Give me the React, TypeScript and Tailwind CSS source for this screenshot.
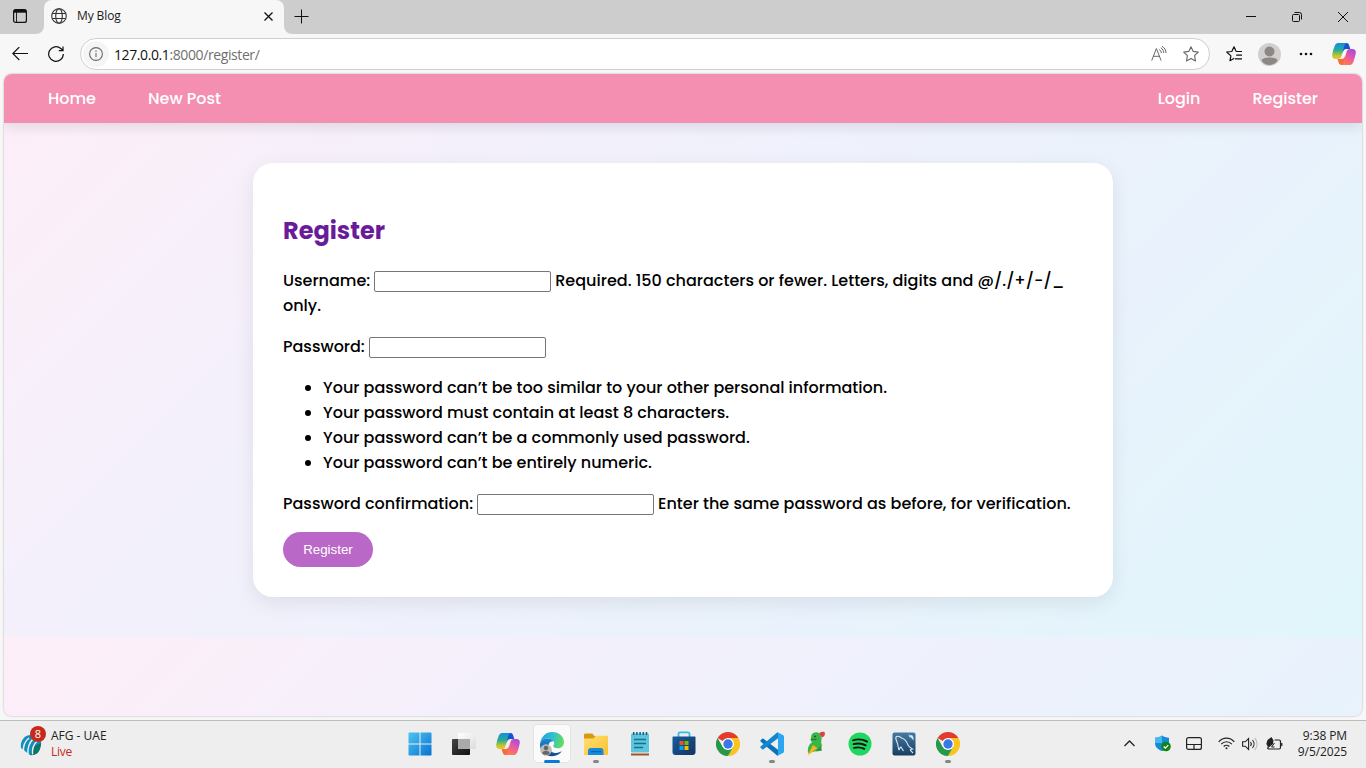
import React from "react";

const Windows = () => (
  <svg width="24" height="24" viewBox="0 0 24 24">
    <defs>
      <linearGradient id="win" x1="0" y1="0" x2="1" y2="1" gradientUnits="objectBoundingBox">
        <stop offset="0" stopColor="#4cc5f5" />
        <stop offset="1" stopColor="#0a72cf" />
      </linearGradient>
    </defs>
    <path fill="url(#win)" d="M1 .5h10.500V11.500H.5V1zM12.500 .5H23l.5.500V11.500h-11zM.5 12.500h11v11H1l-.5-.5zM12.500 12.500h11V23l-.5.500H12.500z" />
  </svg>
);

const TaskView = () => (
  <svg width="26" height="24" viewBox="0 0 26 24">
    <defs>
      <linearGradient id="tv1" x1="0" y1="0" x2="1" y2="1">
        <stop offset="0" stopColor="#444" />
        <stop offset="1" stopColor="#111" />
      </linearGradient>
      <linearGradient id="tv2" x1="0" y1="0" x2="1" y2="1">
        <stop offset="0" stopColor="#fff" />
        <stop offset="1" stopColor="#dcdcdc" />
      </linearGradient>
    </defs>
    <rect x="1" y="7" width="18" height="16" rx="1" fill="url(#tv1)" />
    <rect x="7" y="1" width="18" height="16" rx="1" fill="url(#tv2)" />
    <path d="M7 7h12v10H7z" fill="#aaa" />
  </svg>
);

const Copilot = ({ id }: { id: string }) => (
  <svg width="24" height="22" viewBox="0 0 24 22">
    <defs>
      <linearGradient id={id + "a"} x1="0" y1="0" x2="0" y2="1">
        <stop offset="0" stopColor="#168de5" />
        <stop offset=".45" stopColor="#28ad93" />
        <stop offset=".8" stopColor="#c5c72c" />
        <stop offset="1" stopColor="#f5bf22" />
      </linearGradient>
      <linearGradient id={id + "b"} x1=".8" y1="0" x2=".3" y2="1">
        <stop offset="0" stopColor="#a44be0" />
        <stop offset=".55" stopColor="#ee5c9c" />
        <stop offset="1" stopColor="#fc8046" />
      </linearGradient>
    </defs>
    <path d="M10 0h4.500c2 0 2.400 1.300 3 3.500l.8 2.500h-3.800c-2.500 0-3.200 1.500-4 4.500z" fill="#1753cc" />
    <path d="M7 0h8c-1.800.4-2.300 1.700-2.900 3.800L9.500 13c-.6 2-1.400 3-3.500 3H3.500C.8 16-.2 14.200.3 11.500.9 8 2 4.500 3 2.300 3.800.6 5 0 7 0z" fill={"url(#" + id + "a)"} />
    <path d="M14 22H9.500c-2 0-2.600-1.300-3.200-3.500L5.600 16h3.800c2.500 0 3.300-1.500 4.100-4.500z" fill="#f46e3f" />
    <path d="M17 22H9c1.800-.4 2.300-1.700 2.900-3.800L14.500 9c.6-2 1.400-3 3.500-3h2.500c2.700 0 3.700 1.800 3.200 4.500-.6 3.500-1.700 7-2.700 9.200-.8 1.700-2 2.300-4 2.300z" fill={"url(#" + id + "b)"} />
  </svg>
);

const Edge = () => (
  <svg width="26" height="26" viewBox="0 0 26 26">
    <defs>
      <linearGradient id="edg" x1="0" y1=".3" x2="1" y2=".5">
        <stop offset="0" stopColor="#249de0" />
        <stop offset=".5" stopColor="#2fc0d0" />
        <stop offset="1" stopColor="#67dd58" />
      </linearGradient>
      <linearGradient id="edb" x1="0" y1="0" x2="0" y2="1">
        <stop offset="0" stopColor="#1b8ad6" />
        <stop offset="1" stopColor="#114a8b" />
      </linearGradient>
    </defs>
    <path d="M1 13C2 5.500 7 1 13.200 1 20 1 25 5.600 25 11c0 4-2.800 6.300-6.300 6.300-2.800 0-4.500-1-4.500-2.200 0-.8 1-1.200 1-2.900C15.200 9.800 12.500 7.500 8.700 7.500 4.500 7.500 1.700 10 1 13z" fill="url(#edg)" />
    <path d="M1 13.500C1.500 9.500 5 7.500 8.700 7.500c3.300 0 5.300 1.400 6.100 3.100-1-.5-3.800-.4-4.900 2.400-1.200 3.200.8 7.700 5 8.700 3.200.8 6-.3 8-1.600-2 3.200-5.500 5.200-9.900 5.200C6 25.300.600 19.800 1 13.500z" fill="url(#edb)" />
    <circle cx="7" cy="19" r="5.800" fill="#bdbbb8" />
    <circle cx="7" cy="17" r="2.300" fill="#686663" />
    <path d="M3.300 22.200c0-3.400 7.400-3.400 7.400 0-1.500 2-5.900 2-7.400 0z" fill="#686663" />
  </svg>
);

const Folder = () => (
  <svg width="26" height="24" viewBox="0 0 26 24">
    <defs>
      <linearGradient id="fol" x1="0" y1="0" x2="1" y2="1">
        <stop offset="0" stopColor="#ffdf76" />
        <stop offset="1" stopColor="#fbc02c" />
      </linearGradient>
    </defs>
    <path d="M1 3c0-1 .6-1.500 1.500-1.500h6.700L11.500 4H24c.8 0 1 .4 1 1v6H1z" fill="#d99b0c" />
    <path d="M1 6.500h9.500L13 3.800h11c.7 0 1 .4 1 1V22c0 .6-.4 1-1 1H2c-.6 0-1-.4-1-1z" fill="url(#fol)" />
    <path d="M5 23v-4c0-2 1-3 3-3h9.500c2 0 3 1 3 3v4z" fill="#168ad9" />
    <path d="M8 19h10v1.200H8z" fill="#0c63b0" />
  </svg>
);

const Notepad = () => (
  <svg width="20" height="26" viewBox="0 0 20 26">
    <path d="M1 21h18v3.500H1z" fill="#a9541c" />
    <path d="M1 21h18v1.500H1z" fill="#f0f0f0" />
    <rect x="1" y="2.500" width="18" height="19" rx="1" fill="#5cc5e0" />
    <path d="M3.700 1v3M6.900 1v3M10.100 1v3M13.300 1v3M16.500 1v3" stroke="#12617c" strokeWidth="1.500" />
    <path d="M4 8.500h12M4 12.500h12M4 16.500h9" stroke="#15718d" strokeWidth="1.500" />
  </svg>
);

const Store = () => (
  <svg width="24" height="25" viewBox="0 0 24 25">
    <defs>
      <linearGradient id="sto" x1="0" y1="0" x2="1" y2="1">
        <stop offset="0" stopColor="#155d9f" />
        <stop offset="1" stopColor="#15345f" />
      </linearGradient>
    </defs>
    <path d="M6.500 7V3c0-1 .5-1.600 1.500-1.600h8c1 0 1.500.6 1.500 1.600v4" fill="none" stroke="#38b9ee" strokeWidth="1.800" />
    <path d="M.5 6.500c0-.7.300-1 1-1h21c.7 0 1 .3 1 1V21c0 2-1 3-3 3h-17c-2 0-3-1-3-3z" fill="url(#sto)" />
    <path d="M7.500 10h4v4h-4z" fill="#f25022" />
    <path d="M12.500 10h4v4h-4z" fill="#7fba00" />
    <path d="M7.500 15h4v4h-4z" fill="#00a4ef" />
    <path d="M12.500 15h4v4h-4z" fill="#ffb900" />
  </svg>
);

const Chrome = () => (
  <svg width="24" height="24" viewBox="0 0 24 24">
    <path d="M12 12 1.600 6A12 12 0 0 1 22.400 6z" fill="#e33b2e" />
    <path d="M12 12V6h10.400A12 12 0 0 1 12 24l5.200-9z" fill="#fcc31e" />
    <path d="M1.600 6 6.800 15 12 12l5.200 3L12 24A12 12 0 0 1 1.600 6z" fill="#279847" />
    <circle cx="12" cy="12" r="6" fill="#fff" />
    <circle cx="12" cy="12" r="4.700" fill="#3a78e7" />
  </svg>
);

const VSCode = () => (
  <svg width="24" height="24" viewBox="0 0 24 24">
    <path d="M.6 8.200 2.200 6.800c.4-.3.900-.3 1.300 0L18 17.800v5.700c-.6.100-1.100-.1-1.500-.5L.6 9.500c-.5-.4-.5-.9 0-1.300z" fill="#0d72b9" />
    <path d="m.6 15.800 1.600 1.400c.4.300.9.300 1.300 0L18 6.200V.5c-.6-.1-1.100.1-1.500.5L.6 14.500c-.5.4-.5.900 0 1.300z" fill="#1287cf" />
    <path d="M16.500 23c.8.700 1.500.5 2 .3l4.400-2.200c.7-.3 1.100-.9 1.100-1.700V4.600c0-.8-.4-1.400-1.100-1.700L18.500.7c-.5-.2-1.200-.4-2 .3.600-.5 1.500-.1 1.500.7v20.600c0 .8-.9 1.200-1.500.7z" fill="#2aa7f1" />
  </svg>
);

const Parrot = () => (
  <svg width="20" height="25" viewBox="0 0 20 25">
    <path d="M13 3c.5-2 3.500-2.800 5.500-2 1 2 .3 4.500-2.500 5.500z" fill="#e23d42" />
    <path d="M5.500 4C7 1 11 .3 13.500 2.500L15.700 7c0 2.500-1 4-.2 5.500 1.300 3-.5 7-4.500 7.500L2 22c-.5-5 .5-8.500 4-10.500L4.500 9z" fill="#39b54a" />
    <path d="M1.500 24.500 7 14l4.500 3-7 5.500z" fill="#f9b51d" />
    <path d="m10 20.500 6-1-1.500-4.500z" fill="#239438" />
    <circle cx="9" cy="5.500" r="1" fill="#175d27" />
    <path d="M5 8.500h5.500" stroke="#1d7930" strokeWidth="1.200" />
  </svg>
);

const Spotify = () => (
  <svg width="24" height="24" viewBox="0 0 24 24">
    <circle cx="12" cy="12" r="11.500" fill="#1ed760" />
    <path d="M5 8.300c5-1.500 10-1 14.200 1.300M5.500 12.200c4.300-1.200 8.500-.8 12.200 1.200M6 15.800c3.700-.9 7.200-.6 10.300 1.100" fill="none" stroke="#111" strokeWidth="1.800" strokeLinecap="round" />
  </svg>
);

const MySQL = () => (
  <svg width="24" height="24" viewBox="0 0 24 24">
    <defs>
      <linearGradient id="mys" x1="0" y1="0" x2="0" y2="1">
        <stop offset="0" stopColor="#467aa1" />
        <stop offset="1" stopColor="#173e62" />
      </linearGradient>
    </defs>
    <rect x=".5" y=".5" width="23" height="23" rx="2" fill="url(#mys)" />
    <path d="M7 18C6 15 6 12.500 5 10 4 7.500 2.800 5.500 4.500 4.500c2.200-.8 3.600.6 5 1.500 4 1 5.500 4 6.800 7.500.8 1.500 2.500 2.500 4.200 3.500-1.500.2-2.500.7-2 1.500l2.500 2.500M7 18c.5-1.500 1-2.300 2-3l2.500 4" fill="none" stroke="#dce9f2" strokeWidth="1.100" />
    <path d="m16 2 1.500 2L17 5l2 .5 2.500 3V5.500L20 3l-1.500.5z" fill="#dbe8f1" />
  </svg>
);

const Globe = () => (
  <svg width="16" height="16" viewBox="0 0 16 16" fill="none" stroke="#333" strokeWidth="1.100">
    <circle cx="8" cy="8" r="7.300" />
    <ellipse cx="8" cy="8" rx="3.300" ry="7.300" />
    <path d="M1.300 5.500h13.400M1.300 10.500h13.400" />
  </svg>
);

type AppItem = { icon: React.ReactNode; state?: "open" | "active"; name: string };

const apps: AppItem[] = [
  { name: "start", icon: <Windows /> },
  { name: "tasks", icon: <TaskView /> },
  { name: "copilot", icon: <Copilot id="tb" /> },
  { name: "edge", icon: <Edge />, state: "active" },
  { name: "files", icon: <Folder />, state: "open" },
  { name: "notepad", icon: <Notepad /> },
  { name: "store", icon: <Store /> },
  { name: "chrome", icon: <Chrome /> },
  { name: "code", icon: <VSCode />, state: "open" },
  { name: "parrot", icon: <Parrot /> },
  { name: "spotify", icon: <Spotify /> },
  { name: "mysql", icon: <MySQL /> },
  { name: "chrome2", icon: <Chrome />, state: "open" },
];

function TabStrip() {
  return (
    <header className="flex h-[34px] shrink-0 bg-[#cdcdcd]">
      <div className="bg-[#f7f7f7]">
        <div className="flex h-full w-11 items-center rounded-br-lg bg-[#cdcdcd] pl-[13px] pb-0.5">
          <svg width="14" height="14" viewBox="0 0 14 14" fill="none" stroke="#111" strokeWidth="1.200">
            <rect x=".6" y=".6" width="12.800" height="12.800" rx="2" />
            <path d="M1 2.200h12" strokeWidth="3" />
            <path d="M3.500 3v10.500" strokeWidth="0.900" />
          </svg>
        </div>
      </div>
      <div className="flex w-60 items-center rounded-t-lg bg-[#f7f7f7] pr-[11px] pb-0.5 pl-[7px]">
        <Globe />
        <span className="ml-2.5 flex-1 text-[12px] tracking-[-0.1px] text-[#1b1b1b]">My Blog</span>
        <svg width="9" height="9" viewBox="0 0 9 9" stroke="#111" strokeWidth="1.300">
          <path d="m.5.5 8 8m0-8-8 8" />
        </svg>
      </div>
      <div className="flex-1 bg-[#f7f7f7]">
        <div className="flex h-full items-center rounded-bl-lg bg-[#cdcdcd] pb-0.5 pl-2.5">
          <svg width="15" height="15" viewBox="0 0 15 15" stroke="#111">
            <path d="M7.500.5v14M.5 7.500h14" />
          </svg>
          <div className="ml-auto flex items-center gap-9 pr-[18px] pt-0.5">
            <svg width="10" height="10" viewBox="0 0 10 10" stroke="#111">
              <path d="M0 4.500h10" />
            </svg>
            <svg width="10" height="10" viewBox="0 0 10 10" fill="none" stroke="#111">
              <rect x=".5" y="2.500" width="7" height="7" rx="1" />
              <path d="M2.500.500H7.500A2 2 0 0 1 9.500 2.500v5" />
            </svg>
            <svg width="10" height="10" viewBox="0 0 10 10" stroke="#111">
              <path d="m0 0 10 10M10 0 0 10" />
            </svg>
          </div>
        </div>
      </div>
    </header>
  );
}

function Toolbar() {
  return (
    <div className="flex h-10 shrink-0 items-center bg-[#f7f7f7] pl-3">
      <svg width="16" height="14" viewBox="0 0 16 14" fill="none" stroke="#111" strokeWidth="1.100">
        <path d="M16 6.500H.8M7.300 0 .8 6.500l6.500 6.500" />
      </svg>
      <svg className="ml-5" width="16" height="16" viewBox="0 0 16 16" fill="none" stroke="#111" strokeWidth="1.200">
        <path d="M15.300 8A7.300 7.300 0 1 1 12.800 2.500L15 4.500M15 .5v4.200h-4.200" />
      </svg>
      <div className="ml-4 flex h-8 w-[1130px] items-center rounded-full border border-[#cfcfcf] bg-white pr-2.5 pl-0.5">
        <div className="flex size-[26px] items-center justify-center rounded-full bg-[#f5f5f5]">
          <svg width="14" height="14" viewBox="0 0 14 14" fill="none" stroke="#6b6b6b" strokeWidth="1.100">
            <circle cx="7" cy="7" r="6.400" />
            <path d="M7 6v4.200M7 3.600v1.300" />
          </svg>
        </div>
        <span className="ml-[5px] text-[14px] tracking-[-0.4px] text-[#707070]">
          <span className="text-[#111]">127.0.0.1</span>:8000/register/
        </span>
        <svg className="ml-auto" width="16" height="16" viewBox="0 0 16 16" fill="none" stroke="#666" strokeWidth="1">
          <path d="M.7 14.500 5.400 2.500l4.700 12M2.300 10.300h6.200M8.300 3.500c1.300.8 2 2 2 3.500M9.800 1.800c2 1.300 2.900 3 3 5.200M11 .3c2.700 1.600 4 3.800 4 6.700" />
        </svg>
        <svg className="ml-4" width="16" height="16" viewBox="0 0 16 16" fill="none" stroke="#666" strokeWidth="1.100" strokeLinejoin="round">
          <path d="m8 .7 2.200 4.700 5.100.7-3.700 3.600.9 5.200L8 12.400l-4.500 2.500.9-5.200L.7 6.100l5.100-.7z" />
        </svg>
      </div>
      <svg className="ml-4" width="17" height="16" viewBox="0 0 17 16" fill="none" stroke="#111" strokeWidth="1.200" strokeLinejoin="round">
        <path d="M8.300 12.300 4 14.700l.9-4.800L.7 6l5.100-.5L8 .8l2.200 4.700M10.200 5.500H16M10.200 9.200H16M9 12.900H16" />
      </svg>
      <svg className="ml-[15px]" width="23" height="23" viewBox="0 0 23 23">
        <circle cx="11.500" cy="11.500" r="11.500" fill="#d2d0ce" />
        <circle cx="11.500" cy="8.500" r="5" fill="#8c8885" />
        <path d="M3.500 17.500c0-4 16-4 16 0-3.500 6-12.500 6-16 0z" fill="#8c8885" />
      </svg>
      <svg className="ml-[18px]" width="14" height="4" viewBox="0 0 14 4" fill="#111">
        <circle cx="2" cy="2" r="1.300" />
        <circle cx="7" cy="2" r="1.300" />
        <circle cx="12" cy="2" r="1.300" />
      </svg>
      <div className="ml-[19px]">
        <Copilot id="br" />
      </div>
    </div>
  );
}

const field = "mx-1 inline-block h-[21px] w-[177px] rounded-[2px] border border-[#767676] bg-white align-middle";

function Page() {
  return (
    <div className="mx-1 flex h-[642px] shrink-0 flex-col overflow-hidden rounded-lg bg-[linear-gradient(135deg,#fdeef8_0%,#f3f0fb_30%,#e9f2fc_70%,#e0f6fb_100%)] bg-[length:100%_563px] font-['Poppins','Inter',sans-serif] text-base font-medium text-black shadow-[0_0_2px_rgba(0,0,0,0.35)]">
      <nav className="flex h-[49px] shrink-0 items-center justify-between bg-[#f48fb1] px-11 text-white shadow-[0_4px_12px_rgba(0,0,0,0.1)]">
        <div className="flex gap-[52px]">
          <span>Home</span>
          <span>New Post</span>
        </div>
        <div className="flex gap-[52px]">
          <span>Login</span>
          <span>Register</span>
        </div>
      </nav>
      <main className="mx-auto mt-10 h-[434px] w-[860px] shrink-0 rounded-[20px] bg-white px-[30px] pt-[50px] leading-[25px] shadow-[0_6px_20px_rgba(0,0,0,0.08)]">
        <h2 className="text-2xl leading-[36px] font-bold text-[#6a1b9a]">Register</h2>
        <p className="mt-[19px] whitespace-nowrap">
          <span>Username:</span>
          <input className={field} />
          <span className="tracking-[0.01px]">Required. 150 characters or fewer. Letters, digits and @/./+/-/_</span>
          <br />
          only.
        </p>
        <p className="mt-4 whitespace-nowrap">
          <span>Password:</span>
          <input className={field} />
        </p>
        <ul className="mt-4 list-disc pl-10 whitespace-nowrap">
          <li>Your password can’t be too similar to your other personal information.</li>
          <li>Your password must contain at least 8 characters.</li>
          <li>Your password can’t be a commonly used password.</li>
          <li>Your password can’t be entirely numeric.</li>
        </ul>
        <p className="mt-4 whitespace-nowrap">
          <span>Password confirmation:</span>
          <input className={field} />
          <span className="tracking-[0.01px]">Enter the same password as before, for verification.</span>
        </p>
        <button className="mt-4 block h-[35px] w-[90px] rounded-[20px] bg-[#ba68c8] font-['Liberation_Sans',sans-serif] text-[13.333px] font-normal text-white">
          Register
        </button>
      </main>
    </div>
  );
}

function Taskbar() {
  return (
    <footer className="mt-1 flex h-12 shrink-0 items-center border-t border-[#bdbdbd] bg-[#eeeeee] pb-0.5 text-[12px] leading-4 text-[#222]">
      <div className="flex w-[400px] items-center pl-5">
        <div className="relative h-8 w-7">
          <svg className="absolute top-1 left-0" width="23" height="24" viewBox="0 0 23 24">
            <path d="M1 16C0 10 3 4 10 3l8 1c4 4 4 10 1 15-4 4-8 4-9 4" fill="#0e8fbd" />
            <path d="M10 23c5 1 9-2 10-7l1-5-7 3z" fill="#0b7567" />
            <path d="M3.500 20C3 14 5 9 9 6M8 22c-.5-6 1-11 5-15M12.500 22.500C12 17 14 12 17 9" fill="none" stroke="#eee" strokeWidth="1.500" />
          </svg>
          <span className="absolute -top-0.5 left-2.5 flex size-4 items-center justify-center rounded-full bg-[#c42b1c] text-[11px] text-white">8</span>
        </div>
        <div className="ml-[3px]">
          <div>AFG - UAE</div>
          <div className="tracking-[-0.3px] text-[#c42b1c]">Live</div>
        </div>
      </div>
      <div className="flex h-[45px] items-center gap-1">
        {apps.map((a) => (
          <div key={a.name} className="relative flex h-full w-10 items-center justify-center">
            {a.state === "active" && <div className="absolute top-[3px] left-px h-[39px] w-[38px] rounded-[4px] border border-[#e4e4e4] bg-[#fafafa]" />}
            <div className="relative">{a.icon}</div>
            {a.state === "active" && <div className="absolute bottom-[3px] h-[3px] w-4 rounded-full bg-[#0a78d4]" />}
            {a.state === "open" && <div className="absolute bottom-[3px] h-[3px] w-1.5 rounded-full bg-[#868686]" />}
          </div>
        ))}
      </div>
      <div className="ml-auto flex items-center pr-[19px]">
        <svg width="11" height="7" viewBox="0 0 11 7" fill="none" stroke="#222" strokeWidth="1.300">
          <path d="m.5 6 5-5 5 5" />
        </svg>
        <svg className="ml-5" width="16" height="17" viewBox="0 0 16 17">
          <path d="M7 .5c2 1.500 4 2 7 2.200V8c0 4-3 6.500-7 8-4-1.500-7-4-7-8V2.700C3 2.500 5 2 7 .5z" fill="#1689d8" />
          <path d="M7 .5V8H0V2.700C3 2.500 5 2 7 .5z" fill="#45baf0" />
          <circle cx="11" cy="11.500" r="4.800" fill="#128318" />
          <path d="m8.700 11.500 1.600 1.700 3-3" fill="none" stroke="#fff" strokeWidth="1.200" />
        </svg>
        <svg className="ml-[15px]" width="16" height="13" viewBox="0 0 16 13" fill="none" stroke="#222" strokeWidth="1.200">
          <rect x=".6" y=".6" width="14.800" height="11.800" rx="2" />
          <path d="M1 7.500h14M8 7.500v5" />
        </svg>
        <svg className="ml-4" width="17" height="13" viewBox="0 0 17 13" fill="none" stroke="#222" strokeWidth="1.200">
          <path d="M.7 4.800c4.300-4.900 11.300-4.900 15.600 0M3.200 7.200c3-3.300 7.600-3.300 10.600 0M5.700 9.500c1.600-1.700 4-1.700 5.600 0" />
          <circle cx="8.500" cy="11.300" r="1" fill="#222" stroke="none" />
        </svg>
        <svg className="ml-[7px]" width="16" height="14" viewBox="0 0 16 14" fill="none" stroke="#222" strokeWidth="1.100">
          <path d="M.6 4.800h2.600L6.600 1.500v11L3.200 9.200H.6zM8.500 5c1 1.200 1 2.800 0 4M10.500 3c2 2.300 2 5.700 0 8" />
          <path d="M12.700 1c3.200 3.400 3.200 8.600 0 12" stroke="#bbb" />
        </svg>
        <svg className="ml-2" width="17" height="14" viewBox="0 0 17 14" fill="none" stroke="#222" strokeWidth="1.200">
          <path d="M8.500 3h4.500c1 0 1.500.5 1.500 1.500v6c0 1-.5 1.500-1.500 1.500H3.500c-1.500 0-2-.5-2-1.500M15.800 6v3" />
          <path d="M5.500 0 7.500 3.500 7 7 4 9.500l-2 1.500L1.500 9 .3 7l1.200-4z" fill="#222" stroke="none" />
          <path d="M4 6.500 2.500 9.500M8.500 6 5.500 10h3" strokeWidth="1" />
        </svg>
        <div className="w-[64px] text-right tracking-[-0.1px]">
          <div>9:38 PM</div>
          <div>9/5/2025</div>
        </div>
      </div>
    </footer>
  );
}

export default function App() {
  return (
    <div className="flex h-[768px] w-[1366px] flex-col overflow-hidden bg-[#f7f7f7] font-['Segoe_UI','Open_Sans',sans-serif]">
      <TabStrip />
      <Toolbar />
      <Page />
      <Taskbar />
    </div>
  );
}
